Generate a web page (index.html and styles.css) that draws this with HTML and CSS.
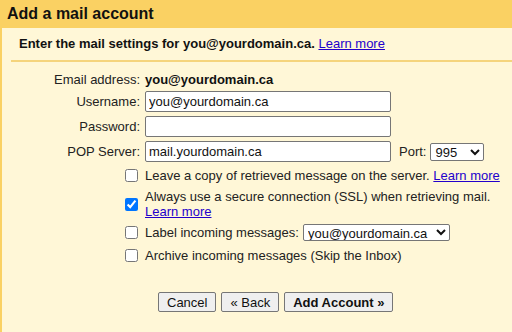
FILE: index.html
```html
<!DOCTYPE html>
<html lang="en">
<head>
    <meta name="viewport" content="width=device-width, initial-scale=1">
    <title>Add a mail account</title>
    <link rel="stylesheet" href="styles.css">
</head>
<body>
    <div class="title-bar">Add a mail account</div>
    <div class="panel">
        <div class="intro">
            Enter the mail settings for you@yourdomain.ca. <a href="#">Learn more</a>
        </div>
        <div class="form">
            <div class="label label-top">Email address:</div>
            <div class="value">you@yourdomain.ca</div>

            <label class="label" for="username">Username:</label>
            <div class="field"><input class="text-input" id="username" type="text" value="you@yourdomain.ca"></div>

            <label class="label" for="password">Password:</label>
            <div class="field"><input class="text-input" id="password" type="password"></div>

            <label class="label" for="server">POP Server:</label>
            <div class="field">
                <input class="text-input" id="server" type="text" value="mail.yourdomain.ca">
                <label class="port-label" for="port">Port:</label>
                <select class="port-select" id="port">
                    <option>995</option>
                    <option>110</option>
                </select>
            </div>

            <input class="check" type="checkbox" id="leave-copy">
            <label class="option" for="leave-copy">Leave a copy of retrieved message on the server. <a href="#">Learn more</a></label>

            <input class="check" type="checkbox" id="ssl" checked>
            <label class="option" for="ssl">Always use a secure connection (SSL) when retrieving mail.<br><a href="#">Learn more</a></label>

            <input class="check" type="checkbox" id="label-incoming">
            <div class="option">
                <label for="label-incoming">Label incoming messages:</label>
                <select class="label-select">
                    <option>you@yourdomain.ca</option>
                </select>
            </div>

            <input class="check" type="checkbox" id="archive">
            <label class="option" for="archive">Archive incoming messages (Skip the Inbox)</label>
        </div>
        <div class="actions">
            <button class="btn">Cancel</button>
            <button class="btn">&laquo; Back</button>
            <button class="btn btn-primary">Add Account &raquo;</button>
        </div>
    </div>
</body>
</html>
```

FILE: styles.css
```css
body {
    font-family: 'Liberation Sans', Arial, sans-serif;
    font-size: 13px;
    line-height: 15px;
    margin: 0;
    padding: 0;
    color: #222;
    background-color: #fff7d7;
    height: 332px;
    overflow: hidden;
}

a {
    color: #2200cc;
}

.title-bar {
    height: 28px;
    padding: 0 7px;
    background-color: #fad163;
    font-size: 16px;
    font-weight: 700;
    line-height: 28px;
    color: #111;
}

.panel {
    border-left: 2px solid #fad163;
    height: 304px;
    box-sizing: border-box;
}

.intro {
    margin-left: 9px;
    padding-left: 8px;
    height: 32px;
    line-height: 32px;
    border-bottom: 2px solid #f5d47c;
    font-weight: 700;
    color: #111;
}

.intro a {
    font-weight: 400;
}

.form {
    display: grid;
    grid-template-columns: 138px 360px;
    grid-template-rows: 20px 21px 21px 21px 19px 30px 19px 19px;
    column-gap: 5px;
    row-gap: 4px;
    margin-top: 5px;
    align-items: center;
}

.label {
    text-align: right;
}

.label-top {
    align-self: end;
}

.value {
    align-self: end;
    font-weight: 700;
    color: #111;
}

.field {
    display: flex;
    align-items: center;
}

.text-input {
    width: 246px;
    height: 21px;
    box-sizing: border-box;
    margin: 0;
    padding: 1px 3px;
    border: 1px solid #767676;
    border-radius: 2px;
    background-color: #fff;
    font-family: 'Liberation Sans', Arial, sans-serif;
    font-size: 13px;
    color: #111;
}

.port-label {
    margin-left: 8px;
    margin-right: 4px;
}

.port-select {
    width: 54px;
    height: 18px;
}

.port-select, .label-select {
    margin: 0;
    font-family: 'Liberation Sans', Arial, sans-serif;
    font-size: 13px;
    border: 1px solid #767676;
    border-radius: 2px;
    background-color: #fff;
    color: #111;
}

.label-select {
    width: 147px;
    height: 17px;
    margin-left: 4px;
}

.check {
    justify-self: end;
    width: 13px;
    height: 13px;
    margin: 0 2px 0 0;
}

.option {
    display: flex;
    align-items: center;
}

label.option {
    display: block;
}

.actions {
    display: flex;
    gap: 5px;
    margin-top: 27px;
    margin-left: 156px;
}

.btn {
    height: 20px;
    margin: 0;
    padding: 1px 8px;
    border: 1px solid #767676;
    border-radius: 2px;
    background-color: #efefef;
    font-family: 'Liberation Sans', Arial, sans-serif;
    font-size: 13px;
    color: #111;
}

.btn-primary {
    font-weight: 700;
}
```
